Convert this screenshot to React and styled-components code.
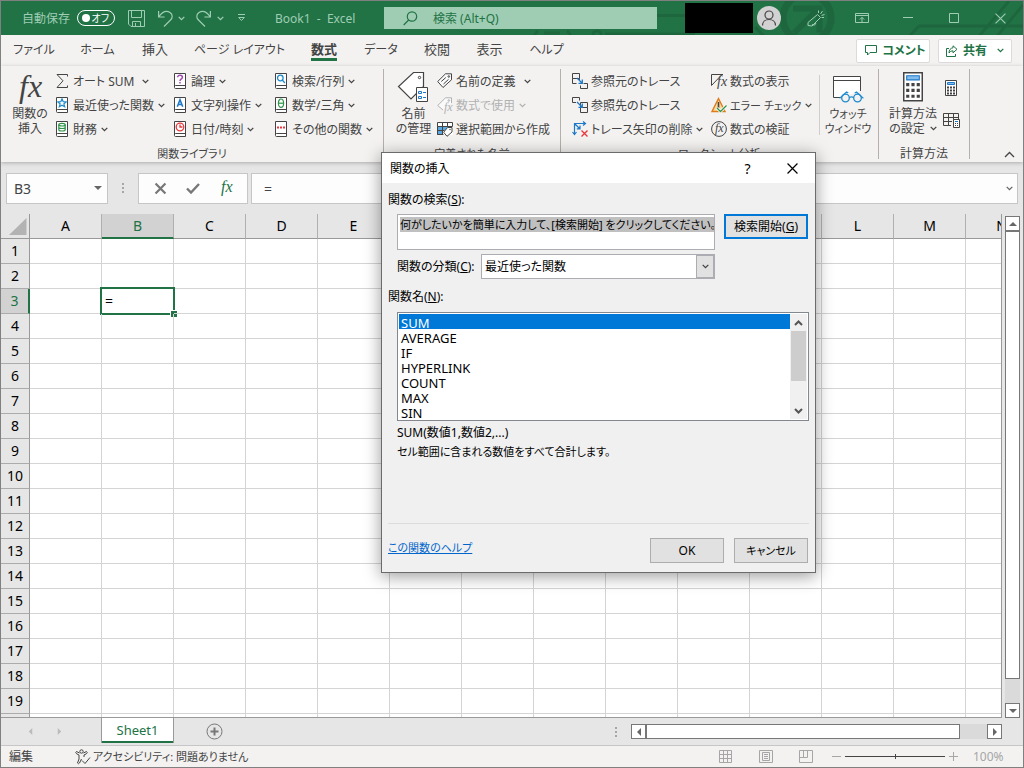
import React, { useEffect, useRef, useState } from 'react';
import styled, { createGlobalStyle, css } from 'styled-components';

const green = '#217346';
const ink = '#444444';

const GlobalStyle = createGlobalStyle`
  * {
    box-sizing: border-box;
  }

  body {
    margin: 0;
    font-family: 'Noto Sans', 'Noto Sans CJK JP', sans-serif;
    font-feature-settings: 'palt';
    font-size: 12px;
    line-height: 15px;
    color: ${ink};
  }

  button, input, textarea, select {
    font: inherit;
    font-feature-settings: inherit;
    color: inherit;
    margin: 0;
    padding: 0;
    border: 0;
    border-radius: 0;
    background: none;
  }

  svg {
    display: block;
    flex: none;
    fill: none;
    overflow: visible;
  }
`;

const Window = styled.div`
  display: flex;
  flex-direction: column;
  height: 100vh;
  border: 1px solid #808080;
  background: #e6e6e6;
  overflow: hidden;
`;

/* ---------- title bar ---------- */

const TitleBar = styled.header`
  position: relative;
  display: flex;
  align-items: center;
  height: 34px;
  flex: none;
  background: ${green};
  color: #9fcdb3;
  white-space: nowrap;
`;

const Circuit = styled.svg`
  position: absolute;
  right: 0;
  top: 0;
  overflow: hidden;
`;

const QuickAccess = styled.div`
  display: flex;
  align-items: center;
  width: 383px;
  padding-left: 21px;
`;

const AutoSave = styled.label`
  display: flex;
  align-items: center;
  gap: 7px;
  width: 106px;
`;

const Toggle = styled.button`
  display: flex;
  align-items: center;
  justify-content: space-between;
  width: 38px;
  height: 16px;
  padding: 0 5px 0 4px;
  border: 1px solid #fff;
  border-radius: 8px;
  color: #fff;
  font-size: 10px;
  line-height: 12px;

  &::before {
    content: '';
    width: 8px;
    height: 8px;
    border-radius: 4px;
    background: #fff;
  }
`;

const QuickButton = styled.button`
  width: ${(p) => p.$w}px;
  display: flex;
`;

const DocTitle = styled.span`
  white-space: pre;
`;

const SearchBox = styled.label`
  position: relative;
  display: flex;
  align-items: center;
  gap: 15px;
  width: 273px;
  height: 22px;
  padding-left: 19px;
  background: #9fcdb3;
  color: ${green};

  input {
    flex: 1;
    min-width: 0;
  }

  input::placeholder {
    color: ${green};
    opacity: 1;
  }
`;

const Account = styled.div`
  position: relative;
  display: flex;
  align-items: center;
  gap: 4px;
  margin-left: auto;
`;

const AccountName = styled.div`
  width: 68px;
  height: 30px;
  background: #000;
`;

const Avatar = styled.button`
  width: 24px;
  height: 24px;
  border-radius: 12px;
  background: #d2d2d2;
`;

const WindowButtons = styled.div`
  position: relative;
  display: flex;
  padding-left: 12px;
`;

const WindowButton = styled.button`
  display: flex;
  justify-content: center;
  align-items: center;
  width: 46px;
`;

/* ---------- ribbon ---------- */

const TabRow = styled.nav`
  display: flex;
  align-items: center;
  height: 31px;
  flex: none;
  background: #f3f2f1;
`;

const TabList = styled.div`
  display: flex;
  align-items: baseline;
`;

const Tab = styled.button`
  display: flex;
  justify-content: center;
  width: ${(p) => p.$w}px;
  height: 24px;
  padding-top: 3px;
  font-size: ${(p) => p.$size}px;
  line-height: 16px;
  white-space: nowrap;

  span {
    height: 20px;
  }

  ${(p) => p.$active && css`
    font-weight: 700;

    span {
      border-bottom: 3px solid ${green};
    }
  `}
`;

const TabActions = styled.div`
  display: flex;
  gap: 8px;
  margin-left: auto;
  padding-right: 11px;
`;

const TabAction = styled.button`
  display: flex;
  align-items: center;
  justify-content: center;
  gap: 5px;
  width: 74px;
  height: 24px;
  border: 1px solid #dddbd9;
  border-radius: 2px;
  background: #fff;
  color: ${green};
  font-size: 12px;
  font-weight: 700;
  white-space: nowrap;

  svg:last-child {
    margin-left: 5px;
  }
`;

const RibbonBody = styled.div`
  display: flex;
  position: relative;
  height: 96px;
  flex: none;
  padding-top: 3px;
  background: #f3f2f1;
  box-shadow: 0 1px 4px rgba(0, 0, 0, 0.25);
`;

const Group = styled.section`
  flex: none;
  width: ${(p) => p.$w}px;
  height: 90px;
  border-right: 1px solid #b3b0ad;
`;

const GroupTools = styled.div`
  display: flex;
  height: 76px;
`;

const GroupTitle = styled.div`
  font-size: ${(p) => p.$size || 11}px;
  line-height: 18px;
  text-align: center;
`;

const Column = styled.div`
  display: flex;
  flex-direction: column;
  flex: none;
  width: ${(p) => p.$w}px;
`;

const Tool = styled.button`
  display: flex;
  align-items: center;
  height: 24px;
  font-size: ${(p) => (p.$small ? 11 : 12)}px;
  white-space: nowrap;
  color: ${(p) => (p.disabled ? '#b1b1b1' : ink)};

  svg:first-child {
    margin-right: ${(p) => (p.$tight ? 3 : 5)}px;
  }

  svg:last-child:not(:first-child) {
    margin-left: ${(p) => (p.$wide ? 8 : 4)}px;
  }
`;

const BigTool = styled.button`
  display: flex;
  flex-direction: column;
  align-items: center;
  flex: none;
  width: ${(p) => p.$w}px;
  padding-top: 3px;
  font-size: ${(p) => (p.$small ? 11 : 12)}px;
  white-space: nowrap;

  svg {
    height: 34px;
  }

  span {
    display: flex;
    align-items: center;
    gap: 5px;
  }

  span svg {
    height: 5px;
  }
`;

const IconTools = styled.div`
  display: flex;
  flex-direction: column;
  gap: 15px;
  padding: 11px 0 0 5px;

  button {
    height: 17px;
  }
`;

const InnerRule = styled.div`
  width: 1px;
  height: 60px;
  margin-top: 6px;
  background: #d0cecc;
`;

const Collapse = styled.button`
  align-self: flex-end;
  margin-left: auto;
  padding: 0 8px 4px;
`;

/* ---------- formula bar ---------- */

const FormulaBar = styled.div`
  display: flex;
  flex: none;
  align-items: center;
  height: 52px;
  padding: 0 5px;
  font-size: 14px;
`;

const FormulaBox = styled.div`
  display: flex;
  align-items: center;
  flex: ${(p) => (p.$w ? 'none' : '1')};
  width: ${(p) => (p.$w ? `${p.$w}px` : 'auto')};
  height: 31px;
  padding: 0 5px;
  border: 1px solid #c6c6c6;
  background: #fdfdfd;

  input {
    flex: 1;
    min-width: 0;
    padding-left: 2px;
  }

  &:last-child {
    margin-left: 3px;
    padding: 0 3px 0 10px;
  }
`;

const FormulaButton = styled.button`
  display: flex;
  justify-content: center;
  align-items: center;
  flex: 1;
`;

const Dots = styled.div`
  width: 30px;
  display: flex;
  justify-content: center;
`;

/* ---------- grid ---------- */

const SheetArea = styled.main`
  display: flex;
  flex: 1;
  min-height: 0;
`;

const GridClip = styled.div`
  flex: 1;
  min-width: 0;
  overflow: hidden;
  border-right: 1px solid #999;
  border-bottom: 1px solid #999;
`;

const Grid = styled.table`
  table-layout: fixed;
  width: 1109px;
  border-collapse: separate;
  border-spacing: 0;
  background: #fff;
  font-size: 14px;
  line-height: 18px;
  color: #000;

  th, td {
    height: 25px;
    padding: 0;
    border-right: 1px solid #d4d4d4;
    border-bottom: 1px solid #d4d4d4;
  }

  td {
    position: relative;
    padding-left: 3px;
  }
`;

const Corner = styled.th`
  width: 29px;
  background: #e6e6e6;

  && {
    border-color: #999;
  }

  svg {
    margin-left: 8px;
  }
`;

const Head = styled.th`
  width: 72px;
  font-weight: 400;
  background: ${(p) => (p.$on ? '#d2d2d2' : '#e6e6e6')};
  color: ${(p) => (p.$on ? green : '#000')};

  thead && {
    border-right-color: #b0b0b0;
    border-bottom: ${(p) => (p.$on ? `2px solid ${green}` : '1px solid #999')};
  }

  tbody && {
    border-right: ${(p) => (p.$on ? `2px solid ${green}` : '1px solid #999')};
    border-bottom-color: #ababab;
  }
`;

const Cursor = styled.span`
  position: absolute;
  inset: -2px;
  border: 2px solid ${green};

  &::after {
    content: '';
    position: absolute;
    right: -4px;
    bottom: -4px;
    width: 6px;
    height: 6px;
    border: 1px solid #fff;
    border-width: 1px 0 0 1px;
    background: ${green};
  }
`;

const VScroll = styled.div`
  display: flex;
  flex-direction: column;
  width: 15px;
  margin: 2px 3px 0 3px;
  background: #dadada;
`;

const HScroll = styled.div`
  display: flex;
  width: 371px;
  height: 15px;
  background: #dadada;
`;

const ScrollButton = styled.button`
  display: flex;
  align-items: center;
  justify-content: center;
  flex: none;
  width: 15px;
  height: 15px;
  border: 1px solid #777;
  background: #fff;
`;

const Thumb = styled.div`
  flex: ${(p) => p.$grow};
  border: 1px solid #777;
  background: #fff;
`;

const Track = styled.div`
  flex: ${(p) => p.$grow};
`;

/* ---------- sheet tabs and status ---------- */

const SheetBar = styled.div`
  display: flex;
  flex: none;
  align-items: center;
  height: 27px;
  padding-right: 21px;
`;

const SheetNav = styled.div`
  display: flex;
  align-items: center;
  gap: 22px;
  width: 100px;
  padding-left: 26px;
`;

const SheetTab = styled.button`
  align-self: flex-start;
  width: 73px;
  height: 25px;
  border: 1px solid #999;
  border-width: 0 1px;
  box-shadow: inset 0 -2px ${green};
  background: #fff;
  color: ${green};
  font-size: 13px;
`;

const AddSheet = styled.button`
  margin: 0 auto 0 32px;
`;

const StatusBar = styled.footer`
  display: flex;
  flex: none;
  align-items: center;
  height: 22px;
  padding: 0 18px 0 8px;
  border-top: 1px solid #c6c6c6;
  background: #f3f2f1;
  white-space: nowrap;
`;

const Mode = styled.span`
  width: 66px;
`;

const Access = styled.button`
  display: flex;
  align-items: center;
  gap: 2px;
  margin-right: auto;
  font-size: 11px;
`;

const Views = styled.div`
  display: flex;
  gap: 26px;
  margin-right: 19px;
`;

const Zoom = styled.div`
  display: flex;
  align-items: center;
  gap: 4px;
  color: #a6a6a6;

  output {
    width: 32px;
    margin-left: 11px;
  }

  input {
    appearance: none;
    width: 100px;
    height: 9px;
    background: linear-gradient(#444, #444) center / 100% 1px no-repeat;
  }

  input::-webkit-slider-thumb {
    appearance: none;
    width: 1px;
    height: 5px;
    background: #444;
  }
`;

/* ---------- dialog ---------- */

const Dialog = styled.form`
  position: absolute;
  left: 381px;
  top: 152px;
  display: flex;
  flex-direction: column;
  width: 435px;
  border: 1px solid #6b6b6b;
  background: #f0f0f0;
  box-shadow: 0 3px 16px rgba(0, 0, 0, 0.4);
  color: #000;
`;

const DialogTitle = styled.div`
  display: flex;
  align-items: center;
  height: 30px;
  padding-left: 8px;
  background: #fff;

  h1 {
    flex: 1;
    margin: 0;
    font-size: 12px;
    font-weight: 400;
  }

  button {
    display: flex;
    justify-content: center;
    width: 45px;
    font-size: 14px;
  }
`;

const DialogBody = styled.div`
  padding: 9px 6px;
`;

const FieldLabel = styled.label`
  display: block;
  height: 15px;
  margin-bottom: ${(p) => p.$gap}px;
`;

const SearchRow = styled.div`
  display: flex;
  align-items: flex-start;
  gap: 9px;
  padding: 0 1px 0 9px;
`;

const Query = styled.textarea`
  flex: 1;
  min-width: 0;
  height: 36px;
  padding: 2px 0 2px 2px;
  border: 1px solid #abadb3;
  background: #fff;
  font-size: 11px;
  line-height: 15px;
  white-space: pre;
  overflow: hidden;
  resize: none;
  outline: none;

  &::selection {
    background: #c0c0c0;
    color: #000;
  }
`;

const DialogButton = styled.button`
  width: ${(p) => p.$w}px;
  height: 25px;
  border: ${(p) => (p.$primary ? '2px solid #0078d7' : '1px solid #adadad')};
  background: #e1e1e1;
  font-size: ${(p) => (p.$small ? 11 : 12)}px;
  white-space: nowrap;
`;

const CategoryRow = styled.div`
  display: flex;
  align-items: center;
  margin: 4px 94px 10px 9px;

  label {
    width: 84px;
    white-space: nowrap;
  }
`;

const Category = styled.div`
  display: flex;
  flex: 1;
  height: 25px;
  border: 1px solid #abadb3;
  background: #fff;

  select {
    flex: 1;
    padding-left: 3px;
    appearance: none;
    outline: none;
  }
`;

const DropArrow = styled.span`
  display: flex;
  align-items: center;
  justify-content: center;
  width: 18px;
  border: 1px solid #abadb3;
  background: #e1e1e1;
`;

const ListFrame = styled.div`
  display: flex;
  height: 109px;
  margin-left: 9px;
  padding: 1px;
  border: 1px solid #828790;
  background: #fff;
`;

const FunctionList = styled.select`
  flex: 1;
  height: 105px;
  overflow: hidden;
  outline: none;
  scrollbar-width: none;

  option {
    height: 15px;
    min-height: 15px;
    padding: 0 2px 3px;
    font-size: 13px;
    line-height: 12px;
    color: #000;
  }

  option:checked {
    background: #0078d7 linear-gradient(#0078d7, #0078d7);
    color: #fff;
    -webkit-text-fill-color: #fff;
  }
`;

const ListScroll = styled.div`
  display: flex;
  flex-direction: column;
  align-items: center;
  width: 17px;
  padding: 6px 1px 5px;
  background: #f0f0f0;

  i {
    width: 15px;
    height: 50px;
    margin: 5px 0 auto;
    background: #cdcdcd;
  }
`;

const Description = styled.div`
  min-height: 102px;
  margin-left: 9px;
  padding-top: 4px;

  p {
    margin: 0 0 4px;
  }

  p + p {
    font-size: 11px;
  }
`;

const DialogFooter = styled.div`
  display: flex;
  align-items: flex-start;
  gap: 10px;
  padding: 14px 1px 0 0;
  border-top: 1px solid #dcdcdc;

  a {
    margin: 2px auto 0 0;
    font-size: 11px;
    color: #0066cc;
  }
`;

/* ---------- icons ---------- */

const Chevron = ({ color = ink, w = 7 }) => (
  <svg width={w} height="5" viewBox="0 0 7 5" stroke={color} strokeWidth="1.3">
    <path d="M.7.9 3.5 3.7 6.3.9" />
  </svg>
);

const Cross = ({ size = 10, color = '#9fcdb3', width = 1 }) => (
  <svg width={size} height={size} viewBox="0 0 10 10" stroke={color} strokeWidth={width}>
    <path d="M.5.5l9 9M9.5.5l-9 9" />
  </svg>
);

const Fx = ({ size, x = 0, y, fill = ink }) => (
  <text x={x} y={y} fill={fill} stroke="none" fontFamily="Liberation Serif, serif" fontStyle="italic" fontSize={size}>
    fx
  </text>
);

const bookMarks = {
  star: <path d="M6 1.8l1.2 2.9 3 .2-2.3 1.9.8 3L6 8.2 3.3 9.8l.8-3-2.3-1.9 3-.2z" stroke="#1e8bcd" strokeWidth="1.2" />,
  money: <g stroke="#2e9348" strokeWidth="1.2"><ellipse cx="6" cy="3.7" rx="3.2" ry="1.3" /><path d="M2.8 3.7v5c0 1.7 6.4 1.7 6.4 0v-5M2.8 6.2c0 1.7 6.4 1.7 6.4 0" /></g>,
  logic: <g stroke="#a349b5" strokeWidth="1.5"><path d="M3.6 4.3c0-2.8 4.8-2.7 4.8 0C8.4 6 6 5.8 6 8" /><path d="M6 9v1.6" /></g>,
  text: <path d="M3.3 9.7L6 2.8l2.7 6.9M4.2 7.5h3.6" stroke="#1e78c8" strokeWidth="1.6" />,
  clock: <g stroke="#e8383d" strokeWidth="1.3"><circle cx="6" cy="6" r="3.8" /><path d="M6 3.5V6h2.4" /></g>,
  lookup: <g stroke="#1e8bcd" strokeWidth="1.3"><circle cx="5.3" cy="5" r="2.8" /><path d="M7.3 7l2.6 3" /></g>,
  theta: <g stroke="#2e9348" strokeWidth="1.2"><ellipse cx="6" cy="6.2" rx="2.6" ry="4.2" /><path d="M3.6 6.2h4.8" /></g>,
  more: <path d="M2 6.5h2M5 6.5h2M8 6.5h2" stroke="#e8383d" strokeWidth="2" />,
};

const Book = ({ mark }) => (
  <svg width="12" height="16" viewBox="0 0 12 16" stroke={ink}>
    <path d="M.5.5h11v15H1.5q-1 0-1-1zM.5 13.5q0-1 1-1h10" fill="#fff" />
    {bookMarks[mark]}
  </svg>
);

const Sigma = () => (
  <svg width="12" height="16" viewBox="0 0 12 16" stroke={ink}>
    <path d="M11.5 3.5v-2H1l6 6.3L1 14.5h10.5v-2" />
  </svg>
);

const BigFx = () => (
  <svg width="34" height="34" viewBox="0 0 34 34"><Fx size="32" x="6" y="25" /></svg>
);

const BigTag = () => (
  <svg width="32" height="34" viewBox="0 0 32 34" stroke={ink}>
    <path d="M15.5.5h10v14L13 27 .5 14.5z" fill="#fff" strokeWidth="1.2" />
    <circle cx="21.5" cy="5.5" r="1.2" />
    <path d="M18.5 15.5h11v14h-11z" fill="#fff" />
    <path d="M20.5 19.5h3v2h-3zM20.5 24.5h3v2h-3zM25 20.5h3M25 25.5h3" stroke="#1e78c8" />
  </svg>
);

const TagIcon = ({ color = ink, fx }) => (
  <svg width="16" height="16" viewBox="0 0 16 16" stroke={color}>
    <path d={fx ? 'M6 13L.7 8.5 8.5.8h6V6' : 'M8.5.8h6v6L6 14.5.7 8.5z'} fill="#fafafa" />
    <circle cx="11.8" cy="3.5" r=".8" />
    {fx ? <Fx size="12" x="7" y="14" fill={color} /> : <path d="M4.3 8.5l4.5-4M6.5 11l5-4.6" />}
  </svg>
);

const SelectionTag = () => (
  <svg width="16" height="16" viewBox="0 0 16 16">
    <path d="M0 1h16v13H0z" fill="#fff" />
    <path d="M0 5h5v9H0zM5 5h5v4H5z" fill="#5ba7e0" />
    <path d="M.5 1.5h15v4H.5zM.5 5.5v8h6M5.5 1.5v12M10.5 1.5V6M.5 9.5h7" stroke={ink} />
    <path d="M10.5 6.5h4.5V11l-5 4.3-3.3-4z" fill="#fff" stroke={ink} />
    <circle cx="13" cy="8.5" r=".7" fill={ink} />
  </svg>
);

const TraceIcon = ({ flip }) => (
  <svg width="16" height="16" viewBox="0 0 16 16" stroke={ink}>
    <path d={flip ? 'M4 5.5H.5v-5h7v3' : 'M.5.5h7v5h-7zM.5 5.5v5h4M7.5 5.5v2'} />
    <path d={flip ? 'M8.5 5.5h7v5h-7zM15.5 10.5v5h-7v-5' : 'M11.5 10.5h4v5h-7v-3'} />
    <path d="M5 5l5 5M10.3 6.5v3.8H6.5" stroke="#1e78c8" strokeWidth="1.3" />
  </svg>
);

const RemoveArrows = () => (
  <svg width="16" height="16" viewBox="0 0 16 16" stroke="#1e78c8" strokeWidth="1.2">
    <path d="M2.5 13V2.5H13M.5 11l2 2.5 2-2.5M11 .5l2.5 2L11 4.5M3 3l4.5 4.5M8 4.5v3.3H4.8" />
    <path d="M9.5 9.5l6 6M15.5 9.5l-6 6" stroke="#e8383d" strokeWidth="1.4" />
  </svg>
);

const ShowFormulas = () => (
  <svg width="16" height="16" viewBox="0 0 16 16" stroke={ink}>
    <path d="M12 1.5H.5v11L11 1.5" />
    <Fx size="14" x="6" y="13" />
  </svg>
);

const ErrorCheck = () => (
  <svg width="16" height="16" viewBox="0 0 16 16">
    <path d="M7.5 1.5l6.5 13H1z" fill="#fbd9a0" stroke="#e07b1a" strokeWidth="1.4" />
    <path d="M7.5 5v6" stroke={ink} strokeWidth="1.6" />
    <path d="M6 11l3.5 3.5 6-6" stroke="#fff" strokeWidth="3" />
    <path d="M6 11l3.5 3.5 6-6" stroke="#2e9348" strokeWidth="1.3" />
  </svg>
);

const Evaluate = () => (
  <svg width="16" height="16" viewBox="0 0 16 16" stroke={ink}>
    <circle cx="8" cy="8" r="7.4" />
    <Fx size="12" x="4" y="11" />
  </svg>
);

const WatchWindow = () => (
  <svg width="32" height="34" viewBox="0 0 32 34" stroke={ink}>
    <path d="M8 25.5H1.5v-21h27V19M1.5 8.5h27" fill="#fff" />
    <g stroke="#1e8bcd" strokeWidth="1.3">
      <circle cx="13.5" cy="26" r="3.8" fill="#f3f2f1" />
      <circle cx="25.5" cy="26" r="3.8" fill="#f3f2f1" />
      <path d="M17.3 25.5q2.2-1.3 4.4 0M9.5 25.5h-1l6-5.5 1.8 1M29.5 25.5h1l-6-5.5-1.8 1" />
    </g>
  </svg>
);

const Calculator = ({ width, height }) => (
  <svg width={width} height={height} viewBox="0 0 19 28" preserveAspectRatio="xMidYMin meet">
    <path d="M.7.7h17.6v26.6H.7z" fill="#fff" stroke={ink} strokeWidth="1.4" />
    <path d="M3.5 3.5h12v4h-12z" fill="#83beec" stroke="#1e78c8" />
    <path d="M3 12h13M3 17.5h13M3 23h13" stroke={ink} strokeWidth="3" strokeDasharray="3 2" />
  </svg>
);

const SmallCalculator = () => (
  <svg width="16" height="17" viewBox="0 0 16 17">
    <path d="M2.5.5h11v15h-11z" fill="#fff" stroke={ink} />
    <path d="M4.5 2.5h7v2h-7z" fill="#83beec" stroke="#1e78c8" />
    <path d="M4 7.5h8M4 10.5h8M4 13.5h8" stroke={ink} strokeWidth="2" strokeDasharray="2 1" />
  </svg>
);

const SheetCalculator = () => (
  <svg width="17" height="17" viewBox="0 0 17 17">
    <path d="M8 13.5H.5V1.5h15V7M.5 5.5h15M.5 9.5H9M5.5 1.5v12M10.5 1.5V8" stroke={ink} />
    <path d="M10.5 7.5h6v8h-6z" fill="#fff" stroke={ink} />
    <path d="M12 9.5h3" stroke="#1e78c8" />
    <path d="M12 11.5h3M12 13.5h3" stroke={ink} strokeDasharray="1 1" />
  </svg>
);

const Triangle = ({ dir, color = '#666', size = 8 }) => {
  const paths = { up: 'M0 6h8L4 2z', down: 'M0 2h8L4 6z', left: 'M6 0v8L2 4z', right: 'M2 0v8l4-4z' };
  return (
    <svg width={size} height={size} viewBox="0 0 8 8"><path d={paths[dir]} fill={color} /></svg>
  );
};

const DotColumn = () => (
  <svg width="2" height="12" viewBox="0 0 2 12">
    <path d="M0 1h2v2H0zM0 5h2v2H0zM0 9h2v2H0z" fill="#a6a6a6" />
  </svg>
);

/* ---------- sections ---------- */

const TopBar = () => (
  <TitleBar>
    <Circuit width="640" height="34" viewBox="0 0 640 34" stroke="#1e673e" strokeWidth="3">
      <path d="M270 14.5h50M222 33h90M155 30q-4 3-4 8M184 30q4 3 4 8M161 32h16" />
      <circle cx="214" cy="34" r="4" />
      <circle cx="424" cy="17" r="24" strokeWidth="7" />
      <path d="M411 32l23-23M410 7.5h26.5v24" strokeWidth="6" />
      <path d="M522 40l14-15h104M592 40l34-40M610 40l30-36M372 26l14 14" />
    </Circuit>
    <QuickAccess>
      <AutoSave>
        自動保存
        <Toggle type="button">オフ</Toggle>
      </AutoSave>
      <QuickButton $w={30} aria-label="上書き保存">
        <svg width="17" height="17" viewBox="0 0 17 17" stroke="#9fcdb3">
          <path d="M.5.5h16v16H3l-2.5-2.5zM3.5.5v7h10v-7M4.5 16.5v-5h8v5M7.5 13v3.5" />
        </svg>
      </QuickButton>
      <QuickButton $w={20} aria-label="元に戻す">
        <svg width="15" height="17" viewBox="0 0 15 17" stroke="#9fcdb3" strokeWidth="1.2">
          <path d="M.6 1v6h6M1 6.5C5 1 9 .5 12 2.5c3 2 2.7 5.500.5 7.500L6 16.500" />
        </svg>
      </QuickButton>
      <QuickButton $w={18} aria-label="元に戻す履歴"><Chevron color="#9fcdb3" /></QuickButton>
      <QuickButton $w={21} aria-label="やり直し">
        <svg width="15" height="17" viewBox="0 0 15 17" stroke="#9fcdb3" strokeWidth="1.2">
          <path d="M14.4 1v6h-6M14 6.5C10 1 6 .5 3 2.5c-3 2-2.7 5.500-.5 7.500L9 16.500" />
        </svg>
      </QuickButton>
      <QuickButton $w={21} aria-label="やり直し履歴"><Chevron color="#9fcdb3" /></QuickButton>
      <QuickButton $w={37} aria-label="カスタマイズ">
        <svg width="7" height="8" viewBox="0 0 7 8" stroke="#9fcdb3"><path d="M0 .5h7M.7 3.5l2.8 3 2.8-3z" /></svg>
      </QuickButton>
      <DocTitle>Book1  -  Excel</DocTitle>
    </QuickAccess>
    <SearchBox>
      <svg width="15" height="15" viewBox="0 0 15 15" stroke={green} strokeWidth="1.2">
        <circle cx="9" cy="5.5" r="4.7" /><path d="M5.7 9L.7 14" />
      </svg>
      <input placeholder="検索 (Alt+Q)" aria-label="検索" />
    </SearchBox>
    <Account>
      <AccountName />
      <Avatar type="button" aria-label="アカウント">
        <svg width="24" height="24" viewBox="0 0 24 24" stroke={ink} strokeWidth="1.2">
          <circle cx="12" cy="9" r="4" /><path d="M5.5 19.5c0-8 13-8 13 0" />
        </svg>
      </Avatar>
    </Account>
    <WindowButtons>
      <WindowButton aria-label="新機能">
        <svg width="18" height="17" viewBox="0 0 18 17" stroke="#9fcdb3">
          <path d="M10.5 4.5l3 3L5 16l-4-.5v-3zM5 14.5q3 2 4-1.5M11.5 3V.5M13.5 4l2-3M14.5 5.5l3-1M14.5 7.5H17" />
        </svg>
      </WindowButton>
      <WindowButton aria-label="リボンの表示オプション">
        <svg width="14" height="12" viewBox="0 0 14 12" stroke="#9fcdb3"><path d="M.5 1.5h13v9H.5zM.5 3.5h13M7 10V5.5M4.8 7.5L7 5.3l2.2 2.2" /></svg>
      </WindowButton>
      <WindowButton aria-label="最小化">
        <svg width="10" height="10" viewBox="0 0 10 10" stroke="#9fcdb3"><path d="M0 4.5h10" /></svg>
      </WindowButton>
      <WindowButton aria-label="最大化">
        <svg width="10" height="10" viewBox="0 0 10 10" stroke="#9fcdb3"><path d="M.5.5h9v9h-9z" /></svg>
      </WindowButton>
      <WindowButton aria-label="閉じる"><Cross size={11} /></WindowButton>
    </WindowButtons>
  </TitleBar>
);

const tabs = [
  ['ファイル', 66, 12], ['ホーム', 61, 12], ['挿入', 54, 13], ['ページ レイアウト', 115, 12], ['数式', 54, 13],
  ['データ', 60, 12], ['校閲', 52, 13], ['表示', 53, 13], ['ヘルプ', 61, 12],
];

const Tabs = () => (
  <TabRow>
    <TabList>
      {tabs.map(([name, w, size]) => (
        <Tab key={name} $w={w} $size={size} $active={name === '数式'}><span>{name}</span></Tab>
      ))}
    </TabList>
    <TabActions>
      <TabAction>
        <svg width="12" height="11" viewBox="0 0 12 11" stroke={green}><path d="M.5.5h11v7H5L2.5 10V7.5h-2z" /></svg>
        コメント
      </TabAction>
      <TabAction>
        <svg width="12" height="12" viewBox="0 0 12 12" stroke={green}>
          <path d="M3 3.5H.5v8h9V9M7 .8l4 3.5-4 3.5V5.8Q4.5 5.6 3 8c0-3 1.5-5 4-5.2z" />
        </svg>
        共有
        <Chevron color={green} />
      </TabAction>
    </TabActions>
  </TabRow>
);

const library = [
  { w: 118, items: [['オート SUM', null], ['最近使った関数', 'star'], ['財務', 'money']] },
  { w: 101, items: [['論理', 'logic'], ['文字列操作', 'text'], ['日付/時刻', 'clock']] },
  { w: 108, items: [['検索/行列', 'lookup'], ['数学/三角', 'theta'], ['その他の関数', 'more']] },
];

const Ribbon = () => (
  <RibbonBody>
    <Group $w={383}>
      <GroupTools>
        <Column $w={3} />
        <BigTool $w={52}><BigFx />関数の<span>挿入</span></BigTool>
        {library.map(({ w, items }) => (
          <Column key={w} $w={w}>
            {items.map(([name, mark]) => (
              <Tool key={name} $wide={!mark}>
                {mark ? <Book mark={mark} /> : <Sigma />}
                {name}
                <Chevron />
              </Tool>
            ))}
          </Column>
        ))}
      </GroupTools>
      <GroupTitle>関数ライブラリ</GroupTitle>
    </Group>
    <Group $w={177}>
      <GroupTools>
        <Column $w={6} />
        <BigTool $w={47}><BigTag />名前<span>の管理</span></BigTool>
        <Column $w={122}>
          <Tool $tight $wide><TagIcon />名前の定義<Chevron /></Tool>
          <Tool $tight disabled><TagIcon color="#b1b1b1" fx />数式で使用<Chevron color="#b1b1b1" /></Tool>
          <Tool $tight><SelectionTag />選択範囲から作成</Tool>
        </Column>
      </GroupTools>
      <GroupTitle>定義された名前</GroupTitle>
    </Group>
    <Group $w={318}>
      <GroupTools>
        <Column $w={11} />
        <Column $w={139}>
          <Tool $tight><TraceIcon />参照元のトレース</Tool>
          <Tool $tight><TraceIcon flip />参照先のトレース</Tool>
          <Tool $tight><RemoveArrows />トレース矢印の削除<Chevron /></Tool>
        </Column>
        <Column $w={108}>
          <Tool $tight><ShowFormulas />数式の表示</Tool>
          <Tool $tight $small><ErrorCheck />エラー チェック<Chevron /></Tool>
          <Tool $tight><Evaluate />数式の検証</Tool>
        </Column>
        <InnerRule />
        <BigTool $w={56} $small><WatchWindow />ウォッチ<span>ウィンドウ</span></BigTool>
      </GroupTools>
      <GroupTitle>ワークシート分析</GroupTitle>
    </Group>
    <Group $w={91}>
      <GroupTools>
        <Column $w={9} />
        <BigTool $w={50}>
          <Calculator width={20} height={29} />
          計算方法
          <span>の設定<Chevron /></span>
        </BigTool>
        <IconTools>
          <button aria-label="再計算実行"><SmallCalculator /></button>
          <button aria-label="シート再計算"><SheetCalculator /></button>
        </IconTools>
      </GroupTools>
      <GroupTitle $size={12}>計算方法</GroupTitle>
    </Group>
    <Collapse aria-label="リボンを折りたたむ">
      <svg width="11" height="7" viewBox="0 0 11 7" stroke={ink} strokeWidth="1.3"><path d="M1 6l4.5-4.5L10 6" /></svg>
    </Collapse>
  </RibbonBody>
);

const Formula = () => (
  <FormulaBar>
    <FormulaBox $w={102}>
      <input defaultValue="B3" aria-label="名前ボックス" />
      <Triangle dir="down" />
    </FormulaBox>
    <Dots><DotColumn /></Dots>
    <FormulaBox $w={110}>
      <FormulaButton aria-label="キャンセル"><Cross size={11} color="#777" width={2} /></FormulaButton>
      <FormulaButton aria-label="入力">
        <svg width="14" height="11" viewBox="0 0 14 11" stroke="#777" strokeWidth="2.4"><path d="M1 5.5l4 4L13 1" /></svg>
      </FormulaButton>
      <FormulaButton aria-label="関数の挿入">
        <svg width="16" height="16" viewBox="0 0 16 16">
          <Fx size="16" x="3" y="12" fill={green} />
        </svg>
      </FormulaButton>
    </FormulaBox>
    <FormulaBox>
      <input defaultValue="=" aria-label="数式バー" />
      <Chevron color="#666" w={9} />
    </FormulaBox>
  </FormulaBar>
);

const columns = 'ABCDEFGHIJKLMNO'.split('');
const rows = Array.from({ length: 20 }, (_, i) => i + 1);

const Sheet = () => (
  <SheetArea>
    <GridClip>
      <Grid>
        <thead>
          <tr>
            <Corner>
              <svg width="18" height="17" viewBox="0 0 18 17"><path d="M17.5 0v17H0z" fill="#b3b3b3" /></svg>
            </Corner>
            {columns.map((c) => <Head key={c} $on={c === 'B'}>{c}</Head>)}
          </tr>
        </thead>
        <tbody>
          {rows.map((r) => (
            <tr key={r}>
              <Head $on={r === 3}>{r}</Head>
              {columns.map((c) => (
                <td key={c}>{r === 3 && c === 'B' && <>=<Cursor /></>}</td>
              ))}
            </tr>
          ))}
        </tbody>
      </Grid>
    </GridClip>
    <VScroll>
      <ScrollButton aria-label="上へ"><Triangle dir="up" /></ScrollButton>
      <Thumb $grow={449} />
      <Track $grow={24} />
      <ScrollButton aria-label="下へ"><Triangle dir="down" /></ScrollButton>
    </VScroll>
  </SheetArea>
);

const BottomBars = () => (
  <>
    <SheetBar>
      <SheetNav>
        <Triangle dir="left" color="#bbb" size={7} />
        <Triangle dir="right" color="#bbb" size={7} />
      </SheetNav>
      <SheetTab>Sheet1</SheetTab>
      <AddSheet aria-label="新しいシート">
        <svg width="17" height="17" viewBox="0 0 17 17" stroke="#777">
          <circle cx="8.5" cy="8.5" r="7.5" /><path d="M8.5 4.5v8M4.5 8.5h8" strokeWidth="2" />
        </svg>
      </AddSheet>
      <Dots><DotColumn /></Dots>
      <HScroll>
        <ScrollButton aria-label="左へ"><Triangle dir="left" /></ScrollButton>
        <Thumb $grow={314} />
        <Track $grow={27} />
        <ScrollButton aria-label="右へ"><Triangle dir="right" /></ScrollButton>
      </HScroll>
    </SheetBar>
    <StatusBar>
      <Mode>編集</Mode>
      <Access>
        <svg width="16" height="16" viewBox="0 0 16 16" stroke={ink}>
          <circle cx="6.5" cy="2.5" r="1.7" />
          <path d="M4.5 4l-3-1.500Q0 3.500 1.500 4.700L4 6v4l-1.500 4q1 1.500 2 0l2-4M8.500 4l3-1.500q1.500 1 0 2.200L9 6v2M7 11.500l3 3 5-6" />
        </svg>
        アクセシビリティ: 問題ありません
      </Access>
      <Views>
        <svg width="14" height="14" viewBox="0 0 14 14" stroke="#a6a6a6"><path d="M.5.5h12v12H.5zM4.5.5v12M8.5.5v12M.5 4.5h12M.5 8.5h12" /></svg>
        <svg width="14" height="14" viewBox="0 0 14 14" stroke="#a6a6a6"><path d="M.5.5h13v12H.5zM3.5 2.5h7v8h-7zM5 4.5h4M5 6.5h4M5 8.5h4" /></svg>
        <svg width="14" height="14" viewBox="0 0 14 14" stroke="#a6a6a6"><path d="M.5.5h13v12H.5zM.5 7.5h8v-7M4.5.5v7" /></svg>
      </Views>
      <Zoom>
        <svg width="9" height="9" viewBox="0 0 9 9" stroke="#a6a6a6"><path d="M0 4.5h9" /></svg>
        <input type="range" defaultValue="50" aria-label="ズーム" />
        <svg width="9" height="9" viewBox="0 0 9 9" stroke="#a6a6a6"><path d="M0 4.5h9M4.5 0v9" /></svg>
        <output>100%</output>
      </Zoom>
    </StatusBar>
  </>
);

const functions = ['SUM', 'AVERAGE', 'IF', 'HYPERLINK', 'COUNT', 'MAX', 'SIN'];

const InsertFunction = () => {
  const query = useRef(null);
  const [selected, setSelected] = useState('SUM');

  useEffect(() => {
    query.current.focus();
    query.current.select();
  }, []);

  return (
    <Dialog onSubmit={(e) => e.preventDefault()}>
      <DialogTitle>
        <h1>関数の挿入</h1>
        <button type="button" aria-label="ヘルプ">?</button>
        <button type="button" aria-label="閉じる"><Cross size={11} color="#000" width={1.1} /></button>
      </DialogTitle>
      <DialogBody>
        <FieldLabel htmlFor="query" $gap={7}>関数の検索(<u>S</u>):</FieldLabel>
        <SearchRow>
          <Query
            id="query"
            ref={query}
            spellCheck={false}
            defaultValue="何がしたいかを簡単に入力して、[検索開始] をクリックしてください。"
          />
          <DialogButton $w={84} $primary>検索開始(<u>G</u>)</DialogButton>
        </SearchRow>
        <CategoryRow>
          <label htmlFor="category">関数の分類(<u>C</u>):</label>
          <Category>
            <select id="category">
              <option>最近使った関数</option>
            </select>
            <DropArrow><Chevron w={9} /></DropArrow>
          </Category>
        </CategoryRow>
        <FieldLabel htmlFor="functions" $gap={8}>関数名(<u>N</u>):</FieldLabel>
        <ListFrame>
          <FunctionList id="functions" size={7} value={selected} onChange={(e) => setSelected(e.target.value)}>
            {functions.map((f) => <option key={f}>{f}</option>)}
          </FunctionList>
          <ListScroll>
            <svg width="9" height="6" viewBox="0 0 9 6" stroke="#555" strokeWidth="2"><path d="M1 5l3.5-3.5L8 5" /></svg>
            <i />
            <svg width="9" height="6" viewBox="0 0 9 6" stroke="#555" strokeWidth="2"><path d="M1 1l3.5 3.5L8 1" /></svg>
          </ListScroll>
        </ListFrame>
        <Description>
          <p>SUM(数値1,数値2,...)</p>
          <p>セル範囲に含まれる数値をすべて合計します。</p>
        </Description>
        <DialogFooter>
          <a href="#help">この関数のヘルプ</a>
          <DialogButton $w={74}>OK</DialogButton>
          <DialogButton $w={74} $small type="button">キャンセル</DialogButton>
        </DialogFooter>
      </DialogBody>
    </Dialog>
  );
};

const App = () => (
  <>
    <GlobalStyle />
    <Window>
      <TopBar />
      <Tabs />
      <Ribbon />
      <Formula />
      <Sheet />
      <BottomBars />
    </Window>
    <InsertFunction />
  </>
);

export default App;
